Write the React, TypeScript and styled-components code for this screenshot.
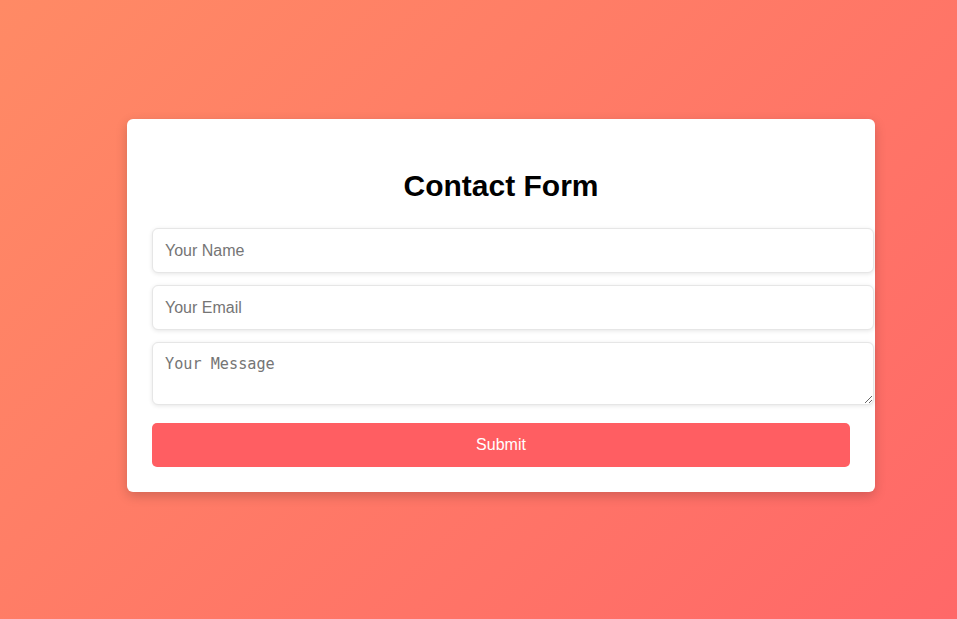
import React from "react";
import styled, { createGlobalStyle } from "styled-components";

const Global = createGlobalStyle`
  html, body { margin: 0; padding: 0; }
  body {
    font-family: "Liberation Sans", Arial, sans-serif;
    background: linear-gradient(135deg, #ff8a65 0%, #ff6868 100%);
    min-height: 100vh;
  }
`;

const Page = styled.div`
  width: 957px;
  height: 619px;
  box-sizing: border-box;
  padding: 119px 0 0 127px;
  background: linear-gradient(135deg, #ff8a65 0%, #ff6868 100%);
`;

const Card = styled.form`
  width: 748px;
  box-sizing: border-box;
  padding: 25px;
  background: #fff;
  border-radius: 6px;
  box-shadow: 0 4px 12px rgba(0, 0, 0, 0.18);
`;

const Title = styled.h2`
  margin: 25px 0 25px;
  text-align: center;
  font-family: "Liberation Sans", Arial, sans-serif;
  font-size: 30px;
  font-weight: 700;
  line-height: 34px;
  color: #000;
`;

const Field = styled.input`
  display: block;
  width: calc(100% + 24px);
  box-sizing: border-box;
  height: 45px;
  padding: 0 12px;
  margin: 0 0 12px;
  border: 1px solid #e6e6e6;
  border-radius: 6px;
  box-shadow: 0 1px 4px rgba(0, 0, 0, 0.1);
  font-family: "Liberation Sans", Arial, sans-serif;
  font-size: 16px;
  color: #333;
  background: #fff;
  outline: none;
  &::placeholder { color: #757575; }
`;

const Message = styled.textarea`
  display: block;
  width: calc(100% + 24px);
  box-sizing: border-box;
  height: 63px;
  padding: 12px 12px;
  margin: 0 0 18px;
  border: 1px solid #e6e6e6;
  border-radius: 6px;
  box-shadow: 0 1px 4px rgba(0, 0, 0, 0.1);
  font-family: "DejaVu Sans Mono", "Liberation Mono", monospace;
  font-size: 15.2px;
  line-height: 18px;
  color: #333;
  background: #fff;
  outline: none;
  &::placeholder { color: #757575; }
`;

const Submit = styled.button`
  display: block;
  width: 100%;
  height: 44px;
  border: none;
  border-radius: 5px;
  background: #ff5e62;
  color: #fff;
  font-family: "Liberation Sans", Arial, sans-serif;
  font-size: 16px;
  cursor: pointer;
`;

export default function App() {
  return (
    <>
      <Global />
      <Page>
        <Card onSubmit={(e) => e.preventDefault()}>
          <Title>Contact Form</Title>
          <Field type="text" placeholder="Your Name" />
          <Field type="email" placeholder="Your Email" />
          <Message placeholder="Your Message" />
          <Submit type="submit">Submit</Submit>
        </Card>
      </Page>
    </>
  );
}
